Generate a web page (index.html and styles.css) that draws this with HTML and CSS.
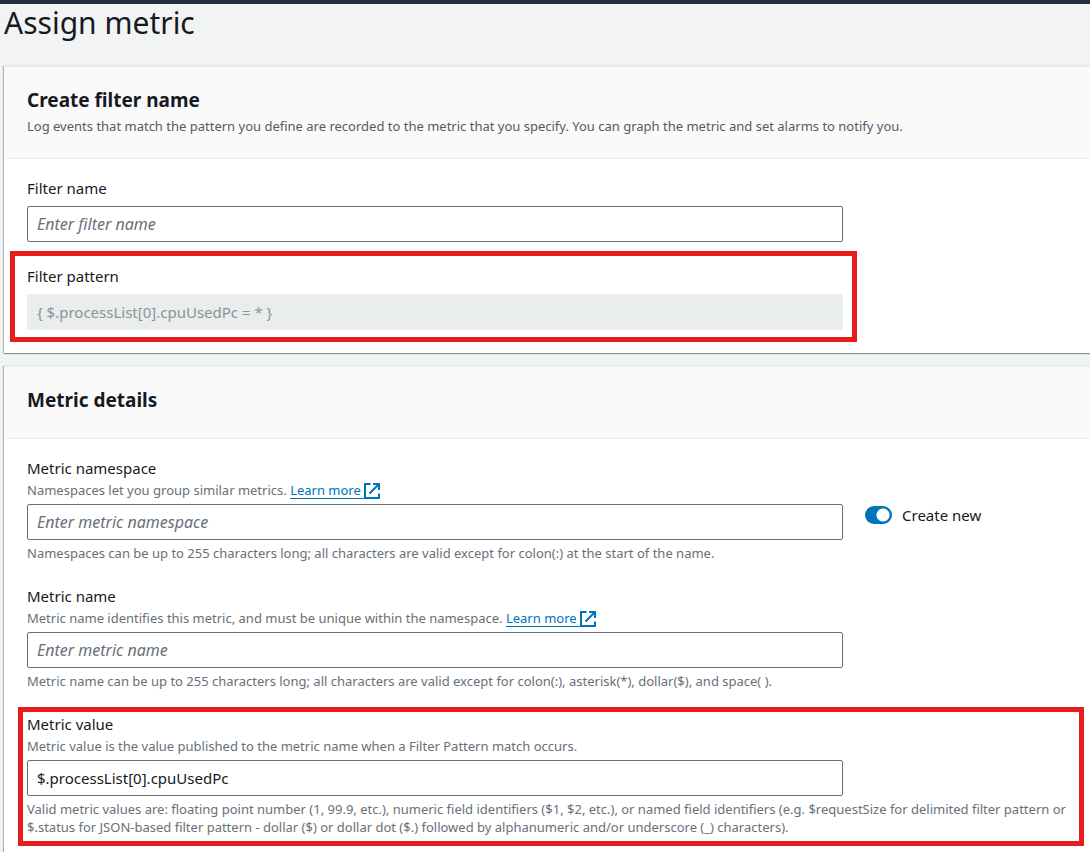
FILE: index.html
```html
<!DOCTYPE html>
<html lang="en">
<head>
<meta charset="utf-8">
<title>Assign metric</title>
<link rel="stylesheet" href="styles.css">
</head>
<body>
<div class="topbar"></div>
<main class="page">
  <h1 class="page-title">Assign metric</h1>

  <section class="card">
    <header class="card-header">
      <h2 class="card-title">Create filter name</h2>
      <p class="card-text">Log events that match the pattern you define are recorded to the metric that you specify. You can graph the metric and set alarms to notify you.</p>
    </header>
    <div class="card-body">
      <div class="field">
        <label class="label spaced" for="filter-name">Filter name</label>
        <input class="input" id="filter-name" type="text" placeholder="Enter filter name">
      </div>
      <div class="field marked marked-pattern">
        <label class="label spaced" for="filter-pattern">Filter pattern</label>
        <input class="input" id="filter-pattern" type="text" value="{ $.processList[0].cpuUsedPc = * }" disabled>
      </div>
    </div>
  </section>

  <section class="card">
    <header class="card-header">
      <h2 class="card-title">Metric details</h2>
    </header>
    <div class="card-body">
      <div class="row">
        <div class="field">
          <label class="label" for="namespace">Metric namespace</label>
          <p class="hint">Namespaces let you group similar metrics. <a class="link" href="#">Learn more <svg class="icon" viewBox="0 0 16 16" aria-hidden="true"><path d="M6.500 1H1v14h14v-4.500M9 1h6v6M14.500 1.500 5.500 10.500"/></svg></a></p>
          <input class="input" id="namespace" type="text" placeholder="Enter metric namespace">
          <p class="constraint">Namespaces can be up to 255 characters long; all characters are valid except for colon(:) at the start of the name.</p>
        </div>
        <label class="toggle"><input class="switch" type="checkbox" role="switch" checked>Create new</label>
      </div>
      <div class="field">
        <label class="label" for="metric-name">Metric name</label>
        <p class="hint">Metric name identifies this metric, and must be unique within the namespace. <a class="link" href="#">Learn more <svg class="icon" viewBox="0 0 16 16" aria-hidden="true"><path d="M6.500 1H1v14h14v-4.500M9 1h6v6M14.500 1.500 5.500 10.500"/></svg></a></p>
        <input class="input" id="metric-name" type="text" placeholder="Enter metric name">
        <p class="constraint">Metric name can be up to 255 characters long; all characters are valid except for colon(:), asterisk(*), dollar($), and space( ).</p>
      </div>
      <div class="field wide marked marked-value">
        <label class="label" for="metric-value">Metric value</label>
        <p class="hint">Metric value is the value published to the metric name when a Filter Pattern match occurs.</p>
        <input class="input" id="metric-value" type="text" value="$.processList[0].cpuUsedPc">
        <p class="constraint">Valid metric values are: floating point number (1, 99.9, etc.), numeric field identifiers ($1, $2, etc.), or named field identifiers (e.g. $requestSize for delimited filter pattern or $.status for JSON-based filter pattern - dollar ($) or dollar dot ($.) followed by alphanumeric and/or underscore (_) characters).</p>
      </div>
    </div>
  </section>
</main>
</body>
</html>
```
FILE: styles.css
```css
* { box-sizing: border-box; }
body {
  margin: 0;
  background: #f2f3f3;
  color: #16191f;
  font: 15px/22px "Noto Sans", "Open Sans", sans-serif;
  overflow-x: hidden;
}
h1, h2, p { margin: 0; }
.topbar { height: 4px; background: #232f3e; }
.page { padding-left: 4px; }
.page-title {
  font-size: 30px;
  line-height: 38px;
  font-weight: 400;
  margin-bottom: 24px;
}
.card {
  background: #fff;
  border-top: 1px solid #eaeded;
  box-shadow: 0 1px 1px #879596, -1px 0 1px #b5bcbc;
  margin-bottom: 13px;
}
.card-header {
  background: #fafafa;
  border-bottom: 1px solid #eaeded;
  padding: 20px 23px 22px;
}
.card-title { font-size: 19px; line-height: 27px; font-weight: 700; margin-bottom: 2px; }
.card-text { font-size: 13px; line-height: 20px; color: #545b64; }
.card-body {
  display: flex;
  flex-direction: column;
  gap: 23px;
  padding: 18px 8px 23px 23px;
}
.row { display: flex; gap: 22px; }
.field {
  display: flex;
  flex-direction: column;
  position: relative;
  width: 100%;
  max-width: 816px;
}
.wide { max-width: none; }
.label { margin-bottom: 2px; }
.label.spaced { margin-bottom: 7px; }
.hint, .constraint { font-size: 13px; line-height: 18px; color: #687078; }
.hint { margin-bottom: 5px; }
.constraint { margin-top: 4px; }
.input {
  width: 100%;
  max-width: 816px;
  height: 36px;
  padding: 0 9px;
  border: 1px solid #687078;
  border-radius: 2px;
  background: #fff;
  color: #16191f;
  font: inherit;
}
.input::placeholder { color: #687078; font-size: 16px; font-style: italic; opacity: 1; }
.input:disabled { background: #eaeded; border-color: #eaeded; color: #879596; }
.link { color: #0073bb; text-underline-offset: 3px; white-space: nowrap; }
.icon {
  width: 16px;
  height: 16px;
  vertical-align: -4px;
  fill: none;
  stroke: currentColor;
  stroke-width: 2;
}
.toggle {
  display: flex;
  align-items: center;
  align-self: flex-start;
  gap: 10px;
  padding-top: 47px;
  white-space: nowrap;
}
.switch {
  appearance: none;
  width: 27px;
  height: 18px;
  margin: 0;
  border-radius: 9px;
  background: radial-gradient(circle at 18px 9px, #fff 6px, #0073bb 7px);
}
.marked::after {
  content: "";
  position: absolute;
  border: 5px solid #e81c1c;
  pointer-events: none;
}
.marked-pattern::after { inset: -14px -14px -12px -17px; }
.marked-value::after { inset: -6px -2px -10px -9px; }
```
